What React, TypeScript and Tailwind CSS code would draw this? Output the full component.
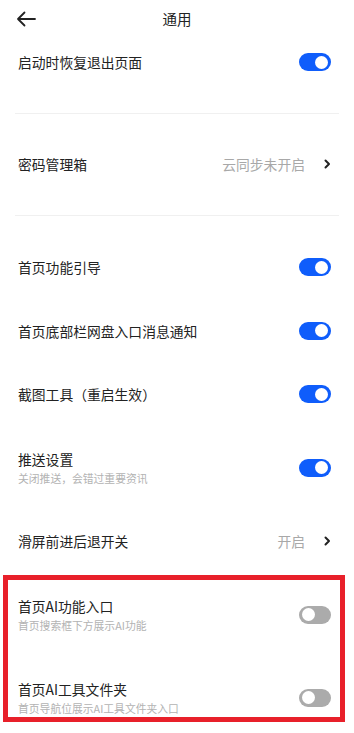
import type { ReactElement } from "react";

const FONT = {
  fontFamily: '"Noto Sans CJK SC", "Noto Sans", sans-serif',
};

function Toggle({ on }: { on: boolean }): ReactElement {
  return (
    <div
      className={
        on
          ? "flex h-[18px] w-[32px] items-center justify-end rounded-full bg-[#0f5dfb] px-[3px]"
          : "flex h-[18px] w-[32px] items-center justify-start rounded-full bg-[#ababab] px-[3px]"
      }
    >
      <div className="h-[13px] w-[13px] rounded-full bg-white" />
    </div>
  );
}

function Chevron(): ReactElement {
  return (
    <svg width="8" height="10" viewBox="0 0 8 10" className="ml-[18px]">
      <path
        d="M2.5 1.5 L6 5 L2.5 8.5"
        fill="none"
        stroke="#222"
        strokeWidth="2"
        strokeLinecap="round"
        strokeLinejoin="round"
      />
    </svg>
  );
}

type RowProps = {
  title: string;
  sub?: string;
  toggle?: boolean;
  value?: string;
  h: string;
};

function Row({ title, sub, toggle, value, h }: RowProps): ReactElement {
  return (
    <div className={`flex items-center justify-between pl-[18px] pr-[23px] ${h}`}>
      <div className="flex flex-col">
        <span className="text-[13.8px] leading-[20px] text-[#222]">{title}</span>
        {sub && (
          <span className="mt-[1px] text-[10.8px] leading-[16px] text-[#b3b3b3]">{sub}</span>
        )}
      </div>
      {toggle !== undefined ? (
        <Toggle on={toggle} />
      ) : (
        <div className="flex items-center">
          <span className="text-[13.8px] leading-[20px] text-[#a8a8a8]">{value}</span>
          <Chevron />
        </div>
      )}
    </div>
  );
}

function Divider({ top, bottom }: { top: string; bottom: string }): ReactElement {
  return <div className={`mx-[15px] h-px bg-[#f0f0f0] ${top} ${bottom}`} />;
}

export default function App(): ReactElement {
  return (
    <div className="h-[733px] w-[354px] overflow-hidden bg-white" style={FONT}>
      {/* header */}
      <div className="relative flex h-[38px] items-center justify-center">
        <svg
          width="20"
          height="16"
          viewBox="0 0 20 16"
          className="absolute left-[16px] top-[11px]"
        >
          <path
            d="M19 8 H2 M8.5 1.5 L2 8 L8.5 14.5"
            fill="none"
            stroke="#222"
            strokeWidth="1.8"
            strokeLinecap="round"
            strokeLinejoin="round"
          />
        </svg>
        <span className="text-[14.5px] text-[#222]">通用</span>
      </div>

      <Row title="启动时恢复退出页面" toggle={true} h="h-[48px]" />
      <Divider top="mt-[27px]" bottom="mb-[18px]" />
      <Row title="密码管理箱" value="云同步未开启" h="h-[64px]" />
      <Divider top="mt-[19px]" bottom="mb-[19px]" />
      <Row title="首页功能引导" toggle={true} h="h-[64px]" />
      <Row title="首页底部栏网盘入口消息通知" toggle={true} h="h-[63px]" />
      <Row title="截图工具（重启生效）" toggle={true} h="h-[64px]" />
      <Row title="推送设置" sub="关闭推送，会错过重要资讯" toggle={true} h="h-[83px]" />
      <Row title="滑屏前进后退开关" value="开启" h="h-[64px]" />

      <div className="relative">
        <Row title="首页AI功能入口" sub="首页搜索框下方展示AI功能" toggle={false} h="h-[83px]" />
        <Row title="首页AI工具文件夹" sub="首页导航位展示AI工具文件夹入口" toggle={false} h="h-[83px]" />
        <div className="pointer-events-none absolute left-[3px] top-[2px] h-[147px] w-[342px] border-[5px] border-[#e8202a]" />
      </div>
    </div>
  );
}
